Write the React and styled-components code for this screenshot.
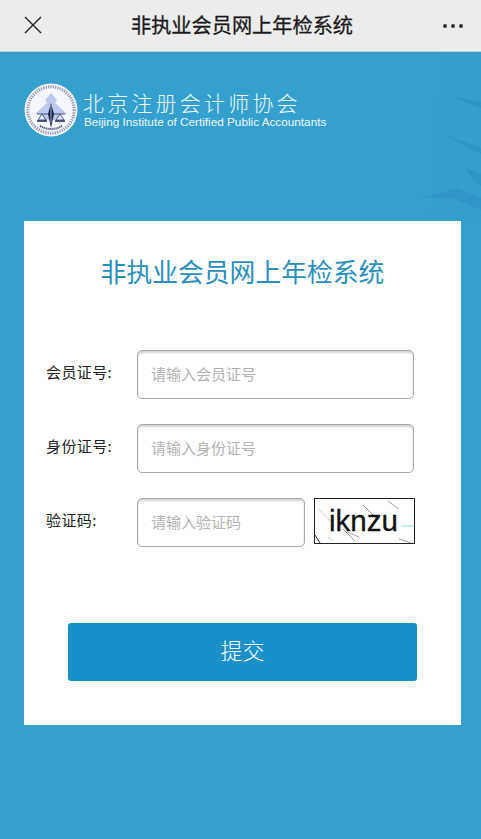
import React from "react";
import styled, { createGlobalStyle } from "styled-components";

const CJK = `"Noto Sans CJK SC", "Liberation Sans", sans-serif`;

const App = () => {
  return (
    <Page>
      <GlobalStyle />
      <TopBar>
        <CloseButton aria-label="close">
          <svg width="18" height="18" viewBox="0 0 18 18" fill="none" stroke="#222" strokeWidth="1.4">
            <path d="M1 1 L17 17 M17 1 L1 17" />
          </svg>
        </CloseButton>
        <BarTitle>非执业会员网上年检系统</BarTitle>
        <MoreDots>
          <i />
          <i />
          <i />
        </MoreDots>
      </TopBar>

      <Hero>
        <BackdropArt width="90" height="170" viewBox="0 0 90 170">
          <path d="M52 0 L90 0 L90 170 L40 170 Z" fill="#2f95c4" opacity="0.14" />
          <path d="M60 44 L90 50 L90 56 L74 50 Z" fill="#1f86b6" opacity="0.35" />
          <path d="M56 84 L90 96 L90 102 L70 92 Z" fill="#1f86b6" opacity="0.35" />
          <path d="M74 116 L90 122 L90 134 L82 128 Z" fill="#1f86b6" opacity="0.35" />
          <path d="M32 146 L66 136 L90 146 L90 158 L62 146 Z" fill="#2488b8" opacity="0.3" />
        </BackdropArt>

        <Brand>
          <LogoMark />
          <BrandText>
            <BrandName>北京注册会计师协会</BrandName>
            <BrandEnglish>Beijing Institute of Certified Public Accountants</BrandEnglish>
          </BrandText>
        </Brand>

        <Card>
          <CardTitle>非执业会员网上年检系统</CardTitle>
          <Form onSubmit={(e) => e.preventDefault()}>
            <Row>
              <Label>会员证号:</Label>
              <Input placeholder="请输入会员证号" />
            </Row>
            <Row>
              <Label>身份证号:</Label>
              <Input placeholder="请输入身份证号" />
            </Row>
            <Row>
              <Label>验证码:</Label>
              <Input $short placeholder="请输入验证码" />
              <Captcha />
            </Row>
            <SubmitButton type="submit">提交</SubmitButton>
          </Form>
        </Card>
      </Hero>
    </Page>
  );
};

export default App;

const LogoMark = () => (
  <svg width="54" height="54" viewBox="0 0 54 54">
    <circle cx="27" cy="27" r="26.5" fill="#f4f6fa" />
    <circle cx="27" cy="27" r="23.2" fill="none" stroke="#55618f" strokeWidth="3" strokeDasharray="1.2 1.2" opacity="0.65" />
    <circle cx="27" cy="27" r="20.8" fill="#f4f6fc" />
    {/* temple */}
    <path d="M27 10 L33 17 L31 20 L43 31 L37 31 L38 37 L16 37 L17 31 L11 31 L23 20 L21 17 Z" fill="#bcc8ec" />
    {/* scales */}
    <path d="M13 31 L41 31" stroke="#2a3768" strokeWidth="0.8" />
    <path d="M18 31 L14 37 L22 37 Z M36 31 L32 37 L40 37 Z" fill="#e6ebf8" stroke="#2a3768" strokeWidth="0.8" />
    <path d="M13 38 L23 38 M31 38 L41 38" stroke="#1f2b5c" strokeWidth="1.4" />
    <path d="M27 20 L24 31 L27 45 L30 31 Z" fill="#1c2552" />
    <path d="M27 22 L27 40" stroke="#dfe5f6" strokeWidth="0.7" />
    <path d="M16 43 Q27 49 38 43" fill="none" stroke="#3a4678" strokeWidth="2" strokeDasharray="1.2 0.8" />
  </svg>
);

const Captcha = () => (
  <CaptchaBox>
    <svg width="99" height="44" viewBox="0 0 99 44" fill="none" strokeWidth="1">
      <path d="M4 10 L15 22" stroke="#e3c6cf" />
      <path d="M48 6 L62 20" stroke="#8d9a94" />
      <path d="M73 2 L84 10" stroke="#a9a9a0" />
      <path d="M28 30 L40 42" stroke="#7fa08c" />
      <path d="M32 33 L44 38" stroke="#c79ab0" />
      <path d="M84 40 L96 44" stroke="#8fa7a0" />
      <path d="M86 27 L99 27" stroke="#8fdcc4" />
      <path d="M0 36 L5 44" stroke="#333" />
      <path d="M13 38 L18 42" stroke="#b5d6cc" />
      <text
        x="14"
        y="32"
        fontFamily="'Liberation Sans', sans-serif"
        fontSize="30"
        fill="#111"
        stroke="#111"
        strokeWidth="0.3"
        textLength="69"
        lengthAdjust="spacingAndGlyphs"
      >
        iknzu
      </text>
    </svg>
  </CaptchaBox>
);

const GlobalStyle = createGlobalStyle`
  html, body {
    margin: 0;
    padding: 0;
    background: #35a0ce;
  }
  * {
    box-sizing: border-box;
  }
`;

const Page = styled.div`
  width: 481px;
  min-height: 839px;
  display: flex;
  flex-direction: column;
  overflow: hidden;
  font-family: ${CJK};
`;

const TopBar = styled.header`
  height: 52px;
  flex: none;
  display: flex;
  align-items: center;
  justify-content: space-between;
  padding: 0 18px 1px 24px;
  background: #ececec;
  border-bottom: 1px solid #b9d4e2;
`;

const CloseButton = styled.button`
  display: flex;
  width: 18px;
  height: 18px;
  padding: 0;
  border: none;
  background: none;
`;

const BarTitle = styled.h1`
  margin: 0 0 0 -1px;
  font-size: 20.2px;
  line-height: 28px;
  font-weight: 400;
  -webkit-text-stroke: 0.3px #1a1a1a;
  color: #1a1a1a;
`;

const MoreDots = styled.div`
  display: flex;
  gap: 4px;
  margin-top: 1px;

  i {
    width: 4px;
    height: 4px;
    border-radius: 50%;
    background: #333;
  }
`;

const Hero = styled.main`
  position: relative;
  flex: 1;
  padding: 31px 20px 114px 24px;
  background: #35a0ce;
`;

const BackdropArt = styled.svg`
  position: absolute;
  top: 0;
  right: 0;
`;

const Brand = styled.div`
  position: relative;
  display: flex;
  align-items: center;
  gap: 5px;
  height: 54px;
`;

const BrandText = styled.div`
  display: flex;
  flex-direction: column;
  margin-top: -2px;
  color: #eef8fc;
`;

const BrandName = styled.div`
  font-family: "Noto Sans CJK SC", "Liberation Serif", serif;
  font-size: 21px;
  line-height: 26px;
  font-weight: 300;
  letter-spacing: 3.2px;
`;

const BrandEnglish = styled.div`
  padding-left: 1px;
  font-family: "Liberation Sans", Arial, sans-serif;
  font-size: 11.75px;
  line-height: 14px;
`;

const Card = styled.section`
  position: relative;
  height: 504px;
  margin-top: 84px;
  padding: 32px 0 44px;
  background: #fff;
`;

const CardTitle = styled.h2`
  margin: 0 0 61px;
  text-align: center;
  font-size: 25.8px;
  line-height: 36px;
  font-weight: 400;
  color: #2b8fbe;
`;

const Form = styled.form`
  display: flex;
  flex-direction: column;
  gap: 25px;
  padding-left: 22px;
`;

const Row = styled.div`
  display: flex;
  align-items: flex-start;
`;

const Label = styled.label`
  width: 91px;
  flex: none;
  font-size: 15px;
  line-height: 22px;
  padding-top: 11px;
  letter-spacing: 0.4px;
  color: #222;
`;

const Input = styled.input`
  width: ${({ $short }) => ($short ? "168px" : "277px")};
  height: 49px;
  padding: 0 12px 2px 13px;
  border: 1px solid #a9a9a9;
  border-radius: 5px;
  outline: none;
  box-shadow: inset 0 2px 2px rgba(0, 0, 0, 0.18);
  background: #fff;
  font-family: ${CJK};
  font-size: 15px;

  &::placeholder {
    color: #b3b3b3;
    opacity: 1;
  }
`;

const CaptchaBox = styled.div`
  width: 101px;
  height: 46px;
  margin-left: 9px;
  border: 1px solid #222;
  background: #fff;

  svg {
    display: block;
  }
`;

const SubmitButton = styled.button`
  width: 349px;
  height: 58px;
  margin: 51px 0 0 22px;
  border: none;
  border-radius: 3px;
  background: #1a8fc9;
  color: #fff;
  font-family: ${CJK};
  font-size: 22px;
  font-weight: 300;
  padding: 0 0 7px;
`;
